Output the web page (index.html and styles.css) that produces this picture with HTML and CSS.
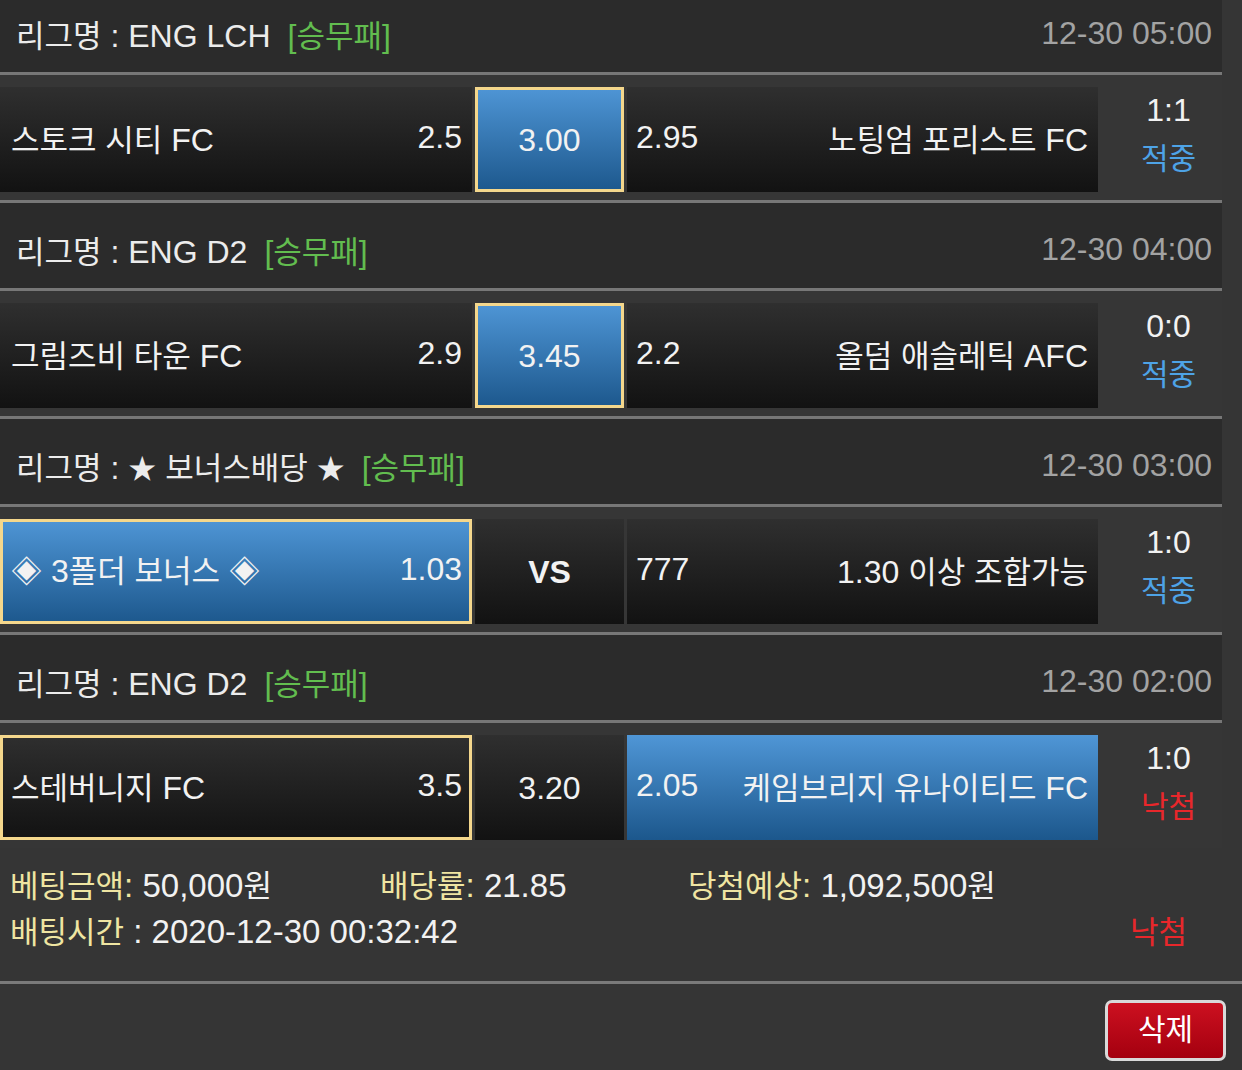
FILE: index.html
```html
<!DOCTYPE html>
<html lang="ko">
<head>
<meta charset="utf-8">
<link rel="stylesheet" href="styles.css">
</head>
<body>
<div class="page">

  <section class="game">
    <div class="league">
      <span class="lg"><span class="k">리그명</span> : ENG LCH</span>
      <span class="type">[<span class="k">승무패</span>]</span>
      <span class="date">12-30 05:00</span>
    </div>
    <div class="match">
      <div class="cell home"><span class="team"><span class="k">스토크 시티</span> FC</span><span class="odd">2.5</span></div>
      <div class="cell draw blue pick"><span class="odd">3.00</span></div>
      <div class="cell away"><span class="odd">2.95</span><span class="team"><span class="k">노팅엄 포리스트</span> FC</span></div>
      <div class="result"><span>1:1</span><span class="kr hit">적중</span></div>
    </div>
  </section>

  <section class="game">
    <div class="league">
      <span class="lg"><span class="k">리그명</span> : ENG D2</span>
      <span class="type">[<span class="k">승무패</span>]</span>
      <span class="date">12-30 04:00</span>
    </div>
    <div class="match">
      <div class="cell home"><span class="team"><span class="k">그림즈비 타운</span> FC</span><span class="odd">2.9</span></div>
      <div class="cell draw blue pick"><span class="odd">3.45</span></div>
      <div class="cell away"><span class="odd">2.2</span><span class="team"><span class="k">올덤 애슬레틱</span> AFC</span></div>
      <div class="result"><span>0:0</span><span class="kr hit">적중</span></div>
    </div>
  </section>

  <section class="game">
    <div class="league">
      <span class="lg"><span class="k">리그명</span> : <span class="star">★</span> <span class="k">보너스배당</span> <span class="star">★</span></span>
      <span class="type">[<span class="k">승무패</span>]</span>
      <span class="date">12-30 03:00</span>
    </div>
    <div class="match">
      <div class="cell home blue pick"><span class="team"><span class="k">◈</span> 3<span class="k">폴더 보너스</span> <span class="k">◈</span></span><span class="odd">1.03</span></div>
      <div class="cell draw"><span class="vs">VS</span></div>
      <div class="cell away"><span class="odd">777</span><span class="team">1.30 <span class="k">이상 조합가능</span></span></div>
      <div class="result"><span>1:0</span><span class="kr hit">적중</span></div>
    </div>
  </section>

  <section class="game last">
    <div class="league">
      <span class="lg"><span class="k">리그명</span> : ENG D2</span>
      <span class="type">[<span class="k">승무패</span>]</span>
      <span class="date">12-30 02:00</span>
    </div>
    <div class="match">
      <div class="cell home pick"><span class="team"><span class="k">스테버니지</span> FC</span><span class="odd">3.5</span></div>
      <div class="cell draw"><span class="odd">3.20</span></div>
      <div class="cell away blue"><span class="odd">2.05</span><span class="team"><span class="k">케임브리지 유나이티드</span> FC</span></div>
      <div class="result"><span>1:0</span><span class="kr miss">낙첨</span></div>
    </div>
  </section>

  <section class="info">
    <div class="info-line">
      <div class="item w1"><span class="label"><span class="k">베팅금액</span>:</span> 50,000<span class="k">원</span></div>
      <div class="item w2"><span class="label"><span class="k">배당률</span>:</span> 21.85</div>
      <div class="item"><span class="label"><span class="k">당첨예상</span>:</span> 1,092,500<span class="k">원</span></div>
    </div>
    <div class="info-line">
      <div class="item"><span class="label"><span class="k">배팅시간</span></span> : 2020-12-30 00:32:42</div>
      <div class="item status"><span class="k miss">낙첨</span></div>
    </div>
  </section>

  <div class="actions">
    <button class="del" type="button"><span class="kr">삭제</span></button>
  </div>

</div>
</body>
</html>
```

FILE: styles.css
```css
* {
  box-sizing: border-box;
}

html, body {
  margin: 0;
  padding: 0;
  background: #353535;
}

body {
  width: 1242px;
  height: 1070px;
  overflow: hidden;
  font-family: "Liberation Sans", "Noto Sans CJK KR", sans-serif;
  font-size: 32px;
  color: #f2f2f2;
}

.page {
  margin-top: -13px;
}

.k {
  font-family: "Noto Sans CJK KR", sans-serif;
  font-size: 31px;
}

.kr {
  font-family: "Noto Sans CJK KR", sans-serif;
  font-size: 30px;
}

.star {
  font-family: "Noto Sans CJK KR", sans-serif;
  font-size: 28px;
}

.game {
  width: 1222px;
}

.league {
  display: flex;
  align-items: center;
  height: 88px;
  padding: 7px 10px 0 16px;
  background: #2b2b2b;
  border-bottom: 3px solid #777;
  white-space: nowrap;
}

.lg {
  color: #ececec;
}

.type {
  margin-left: 17px;
  color: #62bd4f;
}

.date {
  margin-left: auto;
  color: #a3a3a3;
}

.match {
  display: flex;
  gap: 3px;
  height: 128px;
  padding: 12px 0 8px;
  border-bottom: 3px solid #777;
  background: #363636;
}

.game.last .match {
  border-bottom: 0;
  height: 125px;
}

.cell {
  display: flex;
  align-items: center;
  height: 105px;
  border: 3px solid transparent;
  background: linear-gradient(#2f2f2f, #121212) border-box;
  white-space: nowrap;
}

.cell.blue {
  background: linear-gradient(#4f96d6, #1c578c) border-box;
}

.cell.pick {
  border-color: #f4d78c;
}

.home {
  width: 472px;
  justify-content: space-between;
  padding: 0 7px 4px 8px;
}

.draw {
  width: 149px;
  justify-content: center;
  padding-top: 2px;
}

.away {
  width: 471px;
  justify-content: space-between;
  padding: 0 7px 4px 6px;
}

.vs {
  font-weight: bold;
}

.result {
  display: flex;
  flex-direction: column;
  align-items: center;
  flex: 1;
  padding-left: 14px;
  line-height: 46px;
}

.hit {
  color: #4ea3e6;
}

.miss {
  color: #e8272b;
}

.info {
  height: 136px;
  padding: 14px 55px 0 10px;
  border-bottom: 3px solid #7a7a7a;
  font-size: 33px;
  line-height: 44px;
}

.info-line {
  display: flex;
  white-space: nowrap;
}

.label {
  color: #efe5a2;
}

.w1 {
  width: 370px;
}

.w2 {
  width: 308px;
}

.status {
  margin-left: auto;
}

.actions {
  display: flex;
  justify-content: flex-end;
  padding: 16px 16px 0 0;
}

.del {
  width: 121px;
  height: 61px;
  border: 3px solid #d9d9d9;
  border-radius: 7px;
  background: linear-gradient(#cc1020, #a4000f);
  color: #fff;
  padding: 0 0 8px;
  cursor: pointer;
}
```
